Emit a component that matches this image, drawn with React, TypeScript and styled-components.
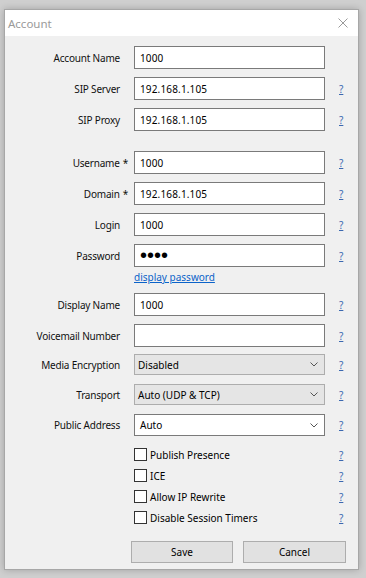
import React from "react";
import styled, { createGlobalStyle } from "styled-components";

const GlobalStyle = createGlobalStyle`
  html, body { margin: 0; padding: 0; }
  body {
    background: #cfcfcf;
    width: 366px;
    height: 578px;
    overflow: hidden;
    font-family: "Noto Sans", "Open Sans", sans-serif;
    color: #000;
  }
`;

const Desktop = styled.div`
  padding: 9px 0 0 4px;
`;

const Window = styled.div`
  width: 355px;
  height: 561px;
  box-sizing: border-box;
  border: 1px solid #a7a7a7;
  background: #f0f0f0;
  box-shadow: 0 0 7px rgba(0, 0, 0, 0.22);
  display: flex;
  flex-direction: column;
`;

const TitleBar = styled.div`
  height: 26px;
  flex: none;
  background: #fff;
  display: flex;
  align-items: center;
  justify-content: space-between;
  padding: 0 10px 0 3px;
`;

const Title = styled.span`
  font-size: 11.5px;
  color: #9a9a9a;
`;

const CloseIcon = styled.svg`
  width: 10px;
  height: 10px;
  display: block;
`;

const Body = styled.div`
  display: flex;
  flex-direction: column;
`;

const FormRow = styled.div<{ $mt: number; $h: number }>`
  display: grid;
  grid-template-columns: 115px 191px auto;
  column-gap: 14px;
  align-items: center;
  margin-top: ${(p) => p.$mt}px;
  height: ${(p) => p.$h}px;
`;

const Label = styled.div`
  display: flex;
  justify-content: flex-end;
  align-items: center;
  font-size: 10px;
  letter-spacing: -0.2px;
  white-space: nowrap;
  color: #111;
`;

const Req = styled.span`
  margin-left: 3px;
  margin-right: -8px;
`;

const TextBox = styled.div`
  box-sizing: border-box;
  height: 23px;
  border: 1px solid #7a7a7a;
  background: #fff;
  display: flex;
  align-items: center;
  padding-left: 5px;
  font-size: 10px;
  letter-spacing: 0.15px;
`;

const Dots = styled.span`
  font-family: "Liberation Sans", Arial, sans-serif;
  font-size: 20px;
  line-height: 1;
  letter-spacing: 0;
  margin-top: -1px;
`;

const Combo = styled.div<{ $editable?: boolean }>`
  box-sizing: border-box;
  height: ${(p) => (p.$editable ? 22 : 21)}px;
  border: 1px solid ${(p) => (p.$editable ? "#7a7a7a" : "#adadad")};
  background: ${(p) => (p.$editable ? "#fff" : "#e5e5e5")};
  display: flex;
  align-items: center;
  justify-content: space-between;
  padding: 0 6px 0 ${(p) => (p.$editable ? 5 : 3)}px;
  font-size: 10px;
`;

const Chevron = styled.svg`
  width: 8px;
  height: 5px;
  display: block;
`;

const Help = styled.a`
  font-size: 10px;
  color: #3b68b0;
  text-decoration: underline;
  justify-self: start;
  cursor: pointer;
`;

const LinkText = styled.a`
  grid-column: 2;
  font-size: 10px;
  color: #0b63c9;
  text-decoration: underline;
  cursor: pointer;
`;

const CheckRow = styled.div<{ $mt: number }>`
  display: grid;
  grid-template-columns: 115px 191px auto;
  column-gap: 14px;
  align-items: center;
  margin-top: ${(p) => p.$mt}px;
  height: 17px;
`;

const CheckLabel = styled.label`
  grid-column: 2;
  display: flex;
  align-items: center;
  gap: 3px;
  font-size: 10px;
  white-space: nowrap;
`;

const Box = styled.span`
  box-sizing: border-box;
  width: 13px;
  height: 13px;
  border: 1px solid #333;
  background: #fff;
  flex: none;
`;

const ButtonRow = styled.div`
  display: flex;
  gap: 10px;
  margin-top: 15px;
  padding-left: 126px;
`;

const Button = styled.button<{ $w: number }>`
  box-sizing: border-box;
  width: ${(p) => p.$w}px;
  height: 22px;
  border: 1px solid #adadad;
  background: #e1e1e1;
  font-family: "Noto Sans", "Open Sans", sans-serif;
  font-size: 10px;
  color: #000;
  padding: 0;
`;

const ChevronIcon = () => (
  <Chevron viewBox="0 0 8 5">
    <polyline points="0.5,0.5 4,4 7.5,0.5" fill="none" stroke="#555" strokeWidth="1" />
  </Chevron>
);

type Field = {
  label: string;
  req?: boolean;
  value: string;
  mt: number;
  help?: boolean;
  password?: boolean;
};

const topFields: Field[] = [
  { label: "Account Name", value: "1000", mt: 10 },
  { label: "SIP Server", value: "192.168.1.105", mt: 8, help: true },
  { label: "SIP Proxy", value: "192.168.1.105", mt: 8, help: true },
  { label: "Username", req: true, value: "1000", mt: 20, help: true },
  { label: "Domain", req: true, value: "192.168.1.105", mt: 8, help: true },
  { label: "Login", value: "1000", mt: 8, help: true },
  { label: "Password", value: "••••", mt: 8, help: true, password: true },
];

const checks = [
  { label: "Publish Presence", mt: 10 },
  { label: "ICE", mt: 4 },
  { label: "Allow IP Rewrite", mt: 4 },
  { label: "Disable Session Timers", mt: 4 },
];

export default function App() {
  return (
    <>
      <GlobalStyle />
      <Desktop>
        <Window>
          <TitleBar>
            <Title>Account</Title>
            <CloseIcon viewBox="0 0 10 10">
              <path d="M0.5 0.5 L9.5 9.5 M9.5 0.5 L0.5 9.5" stroke="#9a9a9a" strokeWidth="1" fill="none" />
            </CloseIcon>
          </TitleBar>
          <Body>
            {topFields.map((f) => (
              <FormRow key={f.label} $mt={f.mt} $h={23}>
                <Label>
                  {f.label}
                  {f.req && <Req>*</Req>}
                </Label>
                <TextBox>{f.password ? <Dots>{f.value}</Dots> : f.value}</TextBox>
                {f.help && <Help>?</Help>}
              </FormRow>
            ))}
            <FormRow $mt={2} $h={16}>
              <LinkText>display password</LinkText>
            </FormRow>
            <FormRow $mt={8} $h={23}>
              <Label>Display Name</Label>
              <TextBox>1000</TextBox>
              <Help>?</Help>
            </FormRow>
            <FormRow $mt={8} $h={23}>
              <Label>Voicemail Number</Label>
              <TextBox />
              <Help>?</Help>
            </FormRow>
            <FormRow $mt={7} $h={21}>
              <Label>Media Encryption</Label>
              <Combo>
                Disabled
                <ChevronIcon />
              </Combo>
              <Help>?</Help>
            </FormRow>
            <FormRow $mt={9} $h={21}>
              <Label>Transport</Label>
              <Combo>
                Auto (UDP &amp; TCP)
                <ChevronIcon />
              </Combo>
              <Help>?</Help>
            </FormRow>
            <FormRow $mt={9} $h={22}>
              <Label>Public Address</Label>
              <Combo $editable>
                Auto
                <ChevronIcon />
              </Combo>
              <Help>?</Help>
            </FormRow>
            {checks.map((c) => (
              <CheckRow key={c.label} $mt={c.mt}>
                <CheckLabel>
                  <Box />
                  {c.label}
                </CheckLabel>
                <Help>?</Help>
              </CheckRow>
            ))}
            <ButtonRow>
              <Button $w={102}>Save</Button>
              <Button $w={103}>Cancel</Button>
            </ButtonRow>
          </Body>
        </Window>
      </Desktop>
    </>
  );
}
